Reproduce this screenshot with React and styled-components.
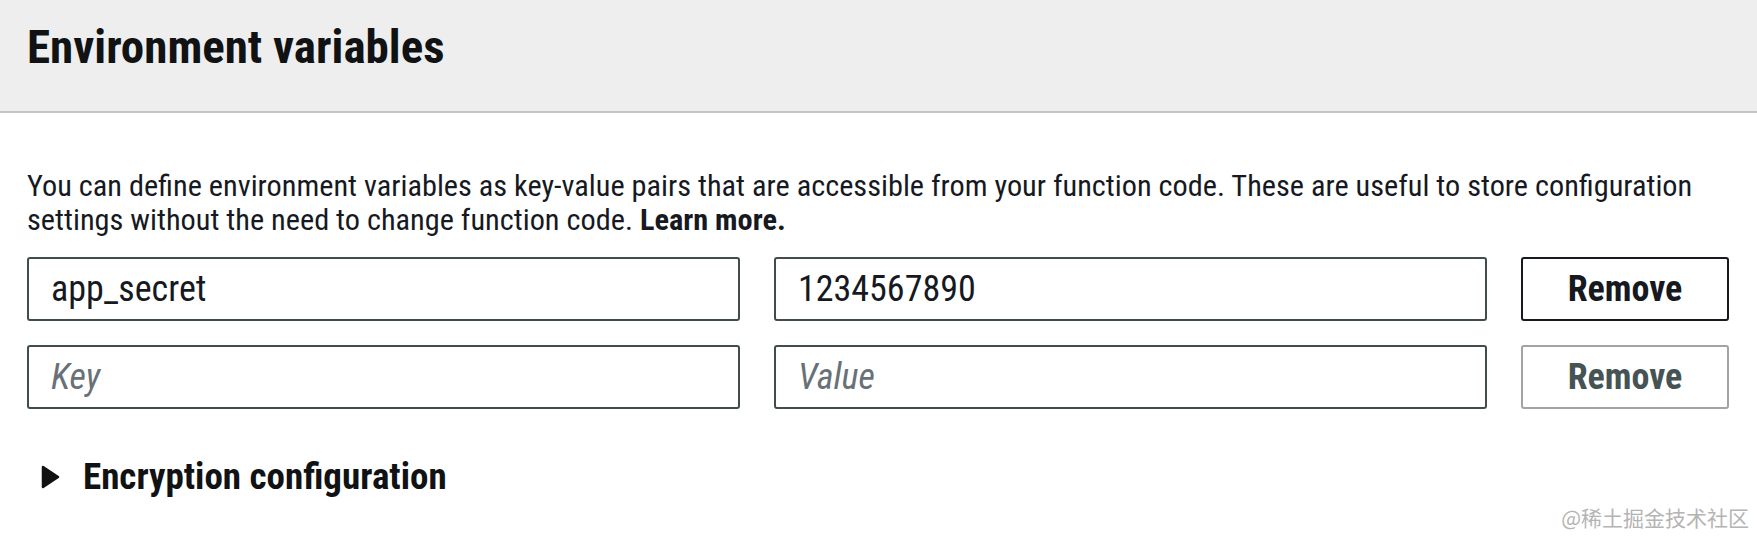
import React from "react";
import styled, { createGlobalStyle } from "styled-components";

const GlobalStyle = createGlobalStyle`
  html, body {
    margin: 0;
    padding: 0;
    background: #ffffff;
  }
  body {
    font-family: "Roboto Condensed", "Liberation Sans", Arial, sans-serif;
    color: #16191f;
  }
`;

const Page = styled.div`
  position: relative;
  width: 1757px;
  height: 536px;
  overflow: hidden;
  background: #fff;
`;

const Header = styled.div`
  height: 113px;
  box-sizing: border-box;
  background: #eeeeee;
  border-bottom: 2px solid #c4c4c4;
  padding: 23px 27px 0;
`;

const Title = styled.h2`
  margin: 0;
  font-size: 47px;
  font-weight: 700;
  color: #101214;
  line-height: 47px;
`;

const Body = styled.div`
  padding: 56px 28px 0 27px;
`;

const Description = styled.p`
  margin: 0 0 20px;
  font-size: 30.3px;
  line-height: 34px;
  color: #16191f;
`;

const LearnMore = styled.b`
  display: inline-block;
  font-weight: 700;
`;

const VarGrid = styled.div`
  display: grid;
  grid-template-columns: 1fr 1fr 208px;
  column-gap: 34px;
  row-gap: 24px;
`;

const Field = styled.input`
  box-sizing: border-box;
  height: 64px;
  width: 100%;
  padding: 0 22px;
  border: 2px solid #414c4d;
  border-radius: 3px;
  font-family: inherit;
  font-size: 36px;
  color: #16191f;
  background: #fff;
  outline: none;

  &::placeholder {
    color: #687078;
    font-style: italic;
  }
`;

const RemoveButton = styled.button`
  box-sizing: border-box;
  height: 64px;
  border: 2px solid ${(p) => (p.disabled ? "#a0a4a4" : "#16191f")};
  border-radius: 3px;
  background: #fff;
  font-family: inherit;
  font-size: 36px;
  font-weight: 700;
  color: ${(p) => (p.disabled ? "#465354" : "#16191f")};
  cursor: ${(p) => (p.disabled ? "default" : "pointer")};
`;

const Expander = styled.div`
  margin-top: 47px;
  display: flex;
  align-items: center;
  gap: 23px;
  padding-left: 14px;
  font-size: 37px;
  font-weight: 700;
  line-height: 42px;
  color: #101214;
`;

const Caret = () => (
  <svg width="19" height="24" viewBox="0 0 19 24">
    <path d="M2 2 L17 12 L2 22 Z" fill="#101214" stroke="#101214" strokeWidth="2.5" strokeLinejoin="round" />
  </svg>
);

const Watermark = styled.div`
  position: absolute;
  right: 8px;
  bottom: 4px;
  font-family: "Noto Sans CJK SC", "Noto Sans", sans-serif;
  font-size: 21px;
  color: #b4b4b4;
`;

const rows = [
  { key: "app_secret", value: "1234567890" },
  { key: "", value: "" },
];

export default function App() {
  return (
    <>
      <GlobalStyle />
      <Page>
        <Header>
          <Title>Environment variables</Title>
        </Header>
        <Body>
          <Description>
            You can define environment variables as key-value pairs that are accessible from your function code. These are useful to store configuration
            settings without the need to change function code. <LearnMore>Learn more.</LearnMore>
          </Description>
          <VarGrid>
            {rows.map((r, i) => (
              <React.Fragment key={i}>
                <Field defaultValue={r.key} placeholder="Key" />
                <Field defaultValue={r.value} placeholder="Value" />
                <RemoveButton disabled={!r.key}>Remove</RemoveButton>
              </React.Fragment>
            ))}
          </VarGrid>
          <Expander>
            <Caret />
            Encryption configuration
          </Expander>
        </Body>
        <Watermark>@稀土掘金技术社区</Watermark>
      </Page>
    </>
  );
}
